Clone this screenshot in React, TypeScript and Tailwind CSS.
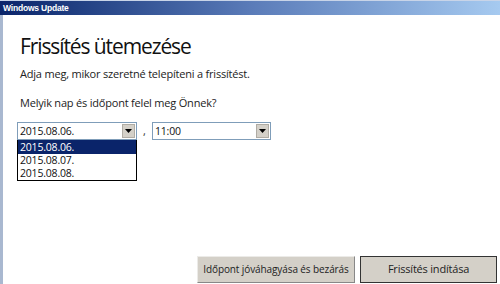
import React from "react";

const Arrow = () => (
  <div className="w-[13px] h-[14px] bg-[#d4d0c8] border border-[#b0aca4] flex items-center justify-center">
    <svg width="7" height="4" viewBox="0 0 7 4">
      <path d="M0 0H7L3.5 4Z" fill="#000" />
    </svg>
  </div>
);

export default function App() {
  return (
    <div className="w-[500px] h-[284px] overflow-hidden bg-white flex flex-col font-['Open_Sans',sans-serif]">
      <div className="h-[15px] bg-gradient-to-r from-[#0a246a] via-[#5a7bb8] to-[#a6caf0] border-t border-[#c8d4e8] flex items-center px-[3px]">
        <span className="text-white text-[8.5px] font-bold leading-none tracking-[-0.2px] font-['Liberation_Sans',sans-serif]">
          Windows Update
        </span>
      </div>
      <div className="flex-1 flex border-l-[3px] border-[#a9b8d0]">
        <div className="flex-1 flex flex-col pl-[17px]">
          <h1 className="mt-[17px] text-[21px] leading-[29px] tracking-[-1.1px] text-[#111]">Frissítés ütemezése</h1>
          <p className="mt-[5px] text-[11px] leading-[16px] tracking-[-0.2px] text-[#222]">Adja meg, mikor szeretné telepíteni a frissítést.</p>
          <p className="mt-[13px] text-[11px] leading-[16px] tracking-[-0.2px] text-[#222]">Melyik nap és időpont felel meg Önnek?</p>
          <div className="mt-[11px] flex items-start">
            <div className="flex flex-col w-[120px] -ml-[3px]">
              <div className="h-[18px] border border-[#7f9db9] flex items-center justify-between pl-[2px] pr-[1px] bg-white">
                <span className="text-[10.5px] leading-none tracking-[-0.2px] text-[#111]">2015.08.06.</span>
                <Arrow />
              </div>
              <div className="border border-black border-t-0 flex flex-col text-[10.5px] leading-[13px] tracking-[-0.2px] text-[#111]">
                <div className="bg-[#0a246a] text-white px-[2px] h-[14px] leading-[14px]">2015.08.06.</div>
                <div className="px-[2px] h-[13px]">2015.08.07.</div>
                <div className="px-[2px] h-[13px]">2015.08.08.</div>
              </div>
            </div>
            <span className="w-[15px] text-center text-[11px] leading-[18px] text-[#333]">,</span>
            <div className="w-[119px] h-[18px] border border-[#7f9db9] flex items-center justify-between pl-[2px] pr-[1px] bg-white">
              <span className="text-[10.5px] leading-none tracking-[-0.2px] text-[#111]">11:00</span>
              <Arrow />
            </div>
          </div>
          <div className="flex-1" />
          <div className="flex justify-end gap-[5px] pr-[3px] mb-[1px]">
            <button className="w-[158px] h-[27px] bg-[#d4d0c8] border border-[#ecebe8] border-r-[#888] border-b-[#888] text-[10px] tracking-[-0.1px] text-[#222] whitespace-nowrap">
              Időpont jóváhagyása és bezárás
            </button>
            <button className="w-[137px] h-[27px] bg-[#d4d0c8] border border-[#333] text-[11px] tracking-[-0.2px] text-[#222] whitespace-nowrap">
              Frissítés indítása
            </button>
          </div>
        </div>
      </div>
    </div>
  );
}
